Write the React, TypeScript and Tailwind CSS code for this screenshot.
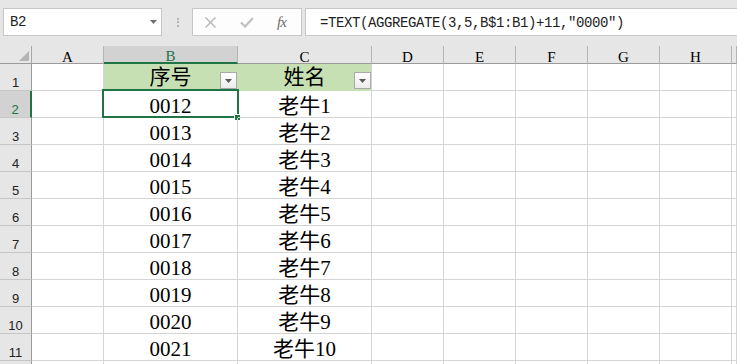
import React from "react";

const COLS = "grid grid-cols-[32px_72px_134px_134px_72px_72px_72px_72px_72px_1fr]";
const LETTERS = ["A", "B", "C", "D", "E", "F", "G", "H", ""];

const cellFont = { fontFamily: '"Liberation Serif", "Noto Sans CJK SC", serif' };
const monoFont = { fontFamily: '"Liberation Mono", "DejaVu Sans Mono", monospace' };
const rowNumFont = { fontFamily: '"Liberation Sans", Arial, sans-serif' };

function FilterButton() {
  return (
    <div className="absolute right-0 bottom-[1px] w-[17px] h-[17px] border border-[#a9a9a9] bg-gradient-to-b from-white to-[#ececec] flex items-center justify-center">
      <svg width="7" height="4" viewBox="0 0 7 4">
        <path d="M0 0 H7 L3.5 4 Z" fill="#595959" />
      </svg>
    </div>
  );
}

function ColHeader() {
  return (
    <div className={COLS + " h-[18px]"}>
      <div className="bg-[#e6e6e6] border-r border-b border-r-[#a8a8a8] border-b-[#9b9b9b] flex items-end justify-end pr-[2px] pb-[2px]">
        <svg width="10" height="10" viewBox="0 0 10 10">
          <path d="M10 0 V10 H0 Z" fill="#b4b4b4" />
        </svg>
      </div>
      {LETTERS.map((l, i) => {
        const sel = l === "B";
        return (
          <div
            key={i}
            className={
              "flex items-end justify-center text-[15px] leading-[12px] border-r border-r-[#b4b4b4] " +
              (sel
                ? "bg-[#d2d2d2] border-b-2 border-b-[#217346] text-[#217346]"
                : "bg-[#e6e6e6] border-b border-b-[#9b9b9b] text-black")
            }
            style={cellFont}
          >
            {l}
          </div>
        );
      })}
    </div>
  );
}

function RowHeaderCell({ n, sel }: { n?: number; sel?: boolean }) {
  return (
    <div
      className={
        "h-[27px] flex items-end justify-center pb-[1px] text-[13px] leading-[13px] border-b border-b-[#c6c6c6] " +
        (sel
          ? "bg-[#d2d2d2] border-r-2 border-r-[#217346] text-[#217346]"
          : "bg-[#e6e6e6] border-r border-r-[#9b9b9b] text-[#222]")
      }
      style={rowNumFont}
    >
      {n}
    </div>
  );
}

function Cell({ children, className = "" }: { children?: React.ReactNode; className?: string }) {
  return (
    <div
      className={
        "relative h-[27px] flex items-end justify-center text-[21px] leading-[21px] text-black border-r border-b " +
        (className || "border-[#d4d4d4]")
      }
      style={cellFont}
    >
      {children}
    </div>
  );
}

function EmptyCells({ count }: { count: number }) {
  return (
    <>
      {Array.from({ length: count }).map((_, i) => (
        <Cell key={i} />
      ))}
    </>
  );
}

export default function App() {
  const data = Array.from({ length: 10 }).map((_, i) => ({
    num: String(12 + i).padStart(4, "0"),
    name: "老牛" + (i + 1),
  }));

  return (
    <div className="w-[737px] h-[364px] overflow-hidden bg-white">
      {/* Formula bar */}
      <div className="h-[46px] bg-[#e6e6e6] flex items-start pt-[8px] pl-[3px]">
        <div className="w-[159px] h-[28px] border border-[#c6c6c6] bg-white flex items-center pl-[6px] pr-[4px]">
          <span className="text-[14px] leading-none tracking-[-0.4px] text-[#222]" style={monoFont}>
            B2
          </span>
          <svg className="ml-auto" width="7" height="4" viewBox="0 0 7 4">
            <path d="M0 0 H7 L3.5 4 Z" fill="#707070" />
          </svg>
        </div>
        <div className="w-[30px] h-[28px] flex flex-col items-center justify-center gap-[1.5px] pl-[1px]">
          <div className="w-[2px] h-[2px] bg-[#b5b5b5]" />
          <div className="w-[2px] h-[2px] bg-[#b5b5b5]" />
          <div className="w-[2px] h-[2px] bg-[#b5b5b5]" />
        </div>
        <div className="w-[110px] h-[28px] border border-[#c6c6c6] bg-[#fdfdfd] flex items-center">
          <svg className="ml-[12px]" width="11" height="11" viewBox="0 0 11 11">
            <path d="M0.5 0.5 L10.5 10.5 M10.5 0.5 L0.5 10.5" stroke="#b5b5b5" strokeWidth="1.4" />
          </svg>
          <svg className="ml-[24px] mt-[1px]" width="14" height="11" viewBox="0 0 14 11">
            <path d="M1 5.5 L5 9.5 L13 1" stroke="#c0c0c0" strokeWidth="2.2" fill="none" />
          </svg>
          <span
            className="ml-[23px] text-[15px] leading-none italic text-[#6e6e6e] tracking-[-1px]"
            style={{ fontFamily: '"Liberation Serif", serif' }}
          >
            fx
          </span>
        </div>
        <div className="ml-[3px] flex-1 h-[28px] border border-r-0 border-[#c6c6c6] bg-white flex items-center pl-[14px] pt-[1px]">
          <span className="text-[14px] leading-none tracking-[-0.4px] text-[#222] whitespace-pre" style={monoFont}>
            =TEXT(AGGREGATE(3,5,B$1:B1)+11,"0000")
          </span>
        </div>
      </div>

      <ColHeader />

      {/* Row 1: header */}
      <div className={COLS}>
        <RowHeaderCell n={1} />
        <Cell />
        <Cell className="bg-[#c6e0b4] border-[#c6e0b4]">
          <span className="pb-[2px]">序号</span>
          <FilterButton />
        </Cell>
        <Cell className="bg-[#c6e0b4] border-[#c6e0b4] border-r-[#d4d4d4]">
          <span className="pb-[2px]">姓名</span>
          <FilterButton />
        </Cell>
        <EmptyCells count={6} />
      </div>

      {data.map((d, i) => (
        <div key={i} className={COLS}>
          <RowHeaderCell n={i + 2} sel={i === 0} />
          <Cell />
          <Cell>
            {d.num}
            {i === 0 && (
              <>
                <div className="absolute left-[-2px] top-[-2px] w-[137px] h-[29px] border-2 border-[#217346] pointer-events-none" />
                <div className="absolute left-[130px] top-[23px] w-[5px] h-[5px] bg-[#217346] border border-white box-content" />
              </>
            )}
          </Cell>
          <Cell>{d.name}</Cell>
          <EmptyCells count={6} />
        </div>
      ))}

      <div className={COLS}>
        <RowHeaderCell />
        <EmptyCells count={9} />
      </div>
    </div>
  );
}
